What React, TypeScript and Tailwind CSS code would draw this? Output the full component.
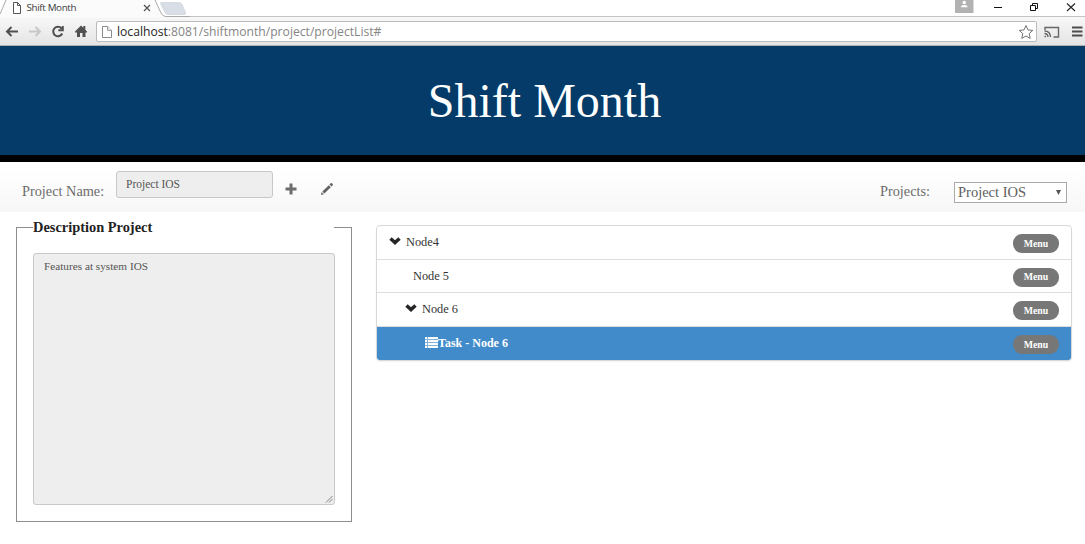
import type { ReactNode } from "react";

function PageIcon({ className, color }: { className: string; color: string }) {
  return (
    <svg viewBox="0 0 10 12" className={className} fill="#fff" stroke={color} strokeWidth="1">
      <path d="M.5.5h5.2l3.8 3.8v7.2h-9z" />
      <path d="M5.7.5v3.8h3.8" />
    </svg>
  );
}

function Chevron() {
  return (
    <svg viewBox="0 0 12 8" className="mb-[3px] h-2 w-3 shrink-0" fill="none" stroke="#262626" strokeWidth="3.4">
      <path d="M1.5 1.4 6 5.6l4.500-4.200" />
    </svg>
  );
}

function TaskIcon() {
  return (
    <svg viewBox="0 0 13 12" className="mb-[2px] h-3 w-[13px] shrink-0" fill="#fff">
      <path d="M0 0h2v2H0zM3 0h10v2H3zM0 3h2v2H0zM3 3h10v2H3zM0 6h2v2H0zM3 6h10v2H3zM0 9h2v2H0zM3 9h10v2H3z" />
      <path opacity=".35" d="M0 0h13v11H0z" />
    </svg>
  );
}

function BrowserChrome() {
  return (
    <div className="h-[46px] font-['Open_Sans',sans-serif]">
      <div className="flex h-[17px] items-start bg-white">
        <svg viewBox="0 0 190 17" className="h-[17px] w-[190px] shrink-0 overflow-visible">
          <path d="M0 17 6 0h149l6 14q1 3 4 3z" fill="#fbfbfb" />
          <path d="M0 14 6 0M155 0l6 13q1.400 3.500 5 3.500h24" fill="none" stroke="#aaa" />
          <path d="M161 2.500h18q2 0 3 2l3.500 8q.8 2-1.500 2h-16q-2 0-3-2l-4-8q-1-2 0-2z" fill="#d8dde6" stroke="#c8cdd5" strokeWidth=".6" />
          <path d="m144 5 6 6m0-6-6 6" stroke="#555" strokeWidth="1.300" />
          <path d="M13.500 2.500h4l3 3v8h-7zM17.500 2.500v3h3" fill="#fff" stroke="#555" />
          <text x="26.500" y="11.200" fontSize="9.800" textLength="50" fill="#3a3a3a">Shift Month</text>
        </svg>
        <div className="h-[17px] flex-1 border-b border-[#c3c3c3]" />
        <svg viewBox="0 0 135 16" className="h-[17px] w-[135px] shrink-0 border-b border-[#c3c3c3]">
          <path d="M5 0h18.500v13H5z" fill="#b2b2b2" />
          <circle cx="14.300" cy="2.500" r="1.700" fill="#fff" />
          <path d="M11 7.300q0-2.300 3.300-2.300t3.300 2.300z" fill="#fff" />
          <path d="M44 7.500h8" stroke="#111" />
          <path d="M80.500 5.500h5v5h-5zM82.500 5.500v-2h5v5h-2" fill="none" stroke="#111" />
          <path d="m117 3.500 8 7.500m0-7.500-8 7.500" stroke="#222" strokeWidth="1.100" />
        </svg>
      </div>
      <div className="flex h-[29px] items-start border-b border-[#b0b0b0] bg-linear-to-b from-[#f8f8f8] to-[#e4e4e4] pt-1">
        <svg viewBox="0 0 96 22" className="h-[22px] w-24 shrink-0" fill="none" stroke="#505050" strokeWidth="2">
          <path d="M18 10.500H7m4.500-4.500L7 10.500l4.500 4.500" />
          <path d="M29 10.500h11M35.500 6l4.500 4.500-4.500 4.500" stroke="#c7c7c7" />
          <path d="M61.500 7.500a4.700 4.700 0 1 0 .7 5M62.800 5v4.300h-4.500" />
          <path fill="#505050" stroke="none" d="m75 10.500 6-6 2.300 2.300V5h2v3.800l1.700 1.700v1h-1.500V16h-3v-4h-2.500v4h-3v-4.500h-2z" />
        </svg>
        <div className="flex h-[21px] w-[941px] items-center rounded-xs border border-[#bbb] bg-white pr-[2px] pl-[5px]">
          <PageIcon className="h-3 w-2.5" color="#8b8b8b" />
          <div className="ml-[5px] flex-1 text-[12.150px] leading-[18px] text-[#858585]">
            <span className="text-[#252525]">localhost</span>:8081/shiftmonth/project/projectList#
          </div>
          <svg viewBox="0 0 16 16" className="size-4" fill="#fff" stroke="#747474">
            <path d="m8 1.500 2 4.400 4.800.5-3.600 3.200 1 4.800L8 12l-4.200 2.400 1-4.800-3.600-3.200 4.800-.5z" />
          </svg>
        </div>
        <svg viewBox="0 0 48 22" className="h-[22px] w-12 shrink-0" fill="none" stroke="#666">
          <path strokeWidth="1.400" d="M8 9V6.500h13.500v9.500h-5M7.500 15.500H9M7.500 12.500q3.200 0 3.500 3.500M7.500 10q5.700 0 6 6" />
          <path stroke="#4d4d4d" strokeWidth="2" d="M35 6.500h10.500M35 10.500h10.500M35 14.500h10.500" />
        </svg>
      </div>
    </div>
  );
}

function TreeRow({ children, className }: { children: ReactNode; className: string }) {
  return (
    <li className={`flex items-center pr-3 ${className}`}>
      {children}
      <button className="mt-0.5 ml-auto h-[19px] w-[46px] rounded-[9px] bg-[#777] text-[9.800px] leading-[18px] font-bold text-white">
        Menu
      </button>
    </li>
  );
}

export default function App() {
  return (
    <div className="h-[544px] w-[1085px] overflow-hidden bg-white font-['Liberation_Serif',serif]">
      <BrowserChrome />
      <header className="h-[116px] border-b-[7px] border-black bg-[#043b68] pl-[4px] text-center text-[48px] leading-[109px] text-white">
        Shift Month
      </header>
      <div className="mt-[7px] flex h-[43px] items-start bg-linear-to-b from-white to-[#f7f7f7] text-[14.300px] text-[#6c6c6c]">
        <label className="mt-3 ml-[22px] w-[94px] leading-5">Project Name:</label>
        <div className="mt-[2px] h-[27px] w-[157px] rounded-[3px] border border-[#c8c8c8] bg-[#eee] pl-[9px] text-[11.500px] leading-[24px] text-[#555]">
          Project IOS
        </div>
        <svg viewBox="0 0 12 12" className="mt-3.5 ml-3 size-3" fill="#6d6d6d">
          <path d="M4.500.5h3v4h4v3h-4v4h-3v-4h-4v-3h4z" />
        </svg>
        <svg viewBox="0 0 14 14" className="mt-[13px] ml-[23px] size-3.5" fill="#626262">
          <path d="m1 13 .7-2.900 2.200 2.200zM2.400 9.400l6.400-6.200 2 2-6.400 6.300zM9.500 2.500l1.200-1.200q.6-.5 1.200 0l.8.8q.6.6 0 1.200l-1.200 1.200z" />
        </svg>
        <span className="mt-3 ml-auto w-[74px] leading-5">Projects:</span>
        <div className="mt-[13px] mr-[18px] flex h-[21px] w-[113px] items-center border border-[#a9a9a9] bg-white pr-[5px] pl-[3px] text-[14.500px] leading-[19px] text-[#606060]">
          Project IOS
          <svg viewBox="0 0 5 5" className="ml-auto size-[5px]" fill="#555">
            <path d="M0 0h5L2.500 5z" />
          </svg>
        </div>
      </div>
      <main className="flex items-start pl-4">
        <fieldset className="mt-[5px] h-[305px] w-[336px] border border-[#8d8d8d] px-4">
          <legend className="w-[301px] text-[14.400px] leading-[20px] font-bold text-[#222]">Description Project</legend>
          <div className="mt-4 flex h-[252px] w-[302px] rounded-[3px] border border-[#c9c9c9] bg-[#eee] pl-[10px] text-[11.250px] leading-[24px] text-[#555]">
            Features at system IOS
            <svg viewBox="0 0 8 8" className="mt-auto mr-px mb-px ml-auto size-2" stroke="#777" strokeWidth=".9">
              <path d="m1 7.500 6.500-6.500M4 7.500 7.500 4" />
            </svg>
          </div>
        </fieldset>
        <ul className="mt-[13px] ml-6 w-[696px] overflow-hidden rounded-[4px] border border-[#d8d8d8] text-[12.350px] text-[#333] shadow-xs">
          <TreeRow className="h-[34px] border-b border-[#ddd] pl-3">
            <Chevron />
            <span className="ml-[5px]">Node4</span>
          </TreeRow>
          <TreeRow className="h-[33px] border-b border-[#ddd] pl-9">Node 5</TreeRow>
          <TreeRow className="h-[34px] border-b border-[#ddd] pl-7">
            <Chevron />
            <span className="ml-[5px]">Node 6</span>
          </TreeRow>
          <TreeRow className="h-[33px] bg-[#428bca] pl-12 text-[12px] font-bold text-white">
            <TaskIcon />
            <span className="mb-px">Task - Node 6</span>
          </TreeRow>
        </ul>
      </main>
    </div>
  );
}
